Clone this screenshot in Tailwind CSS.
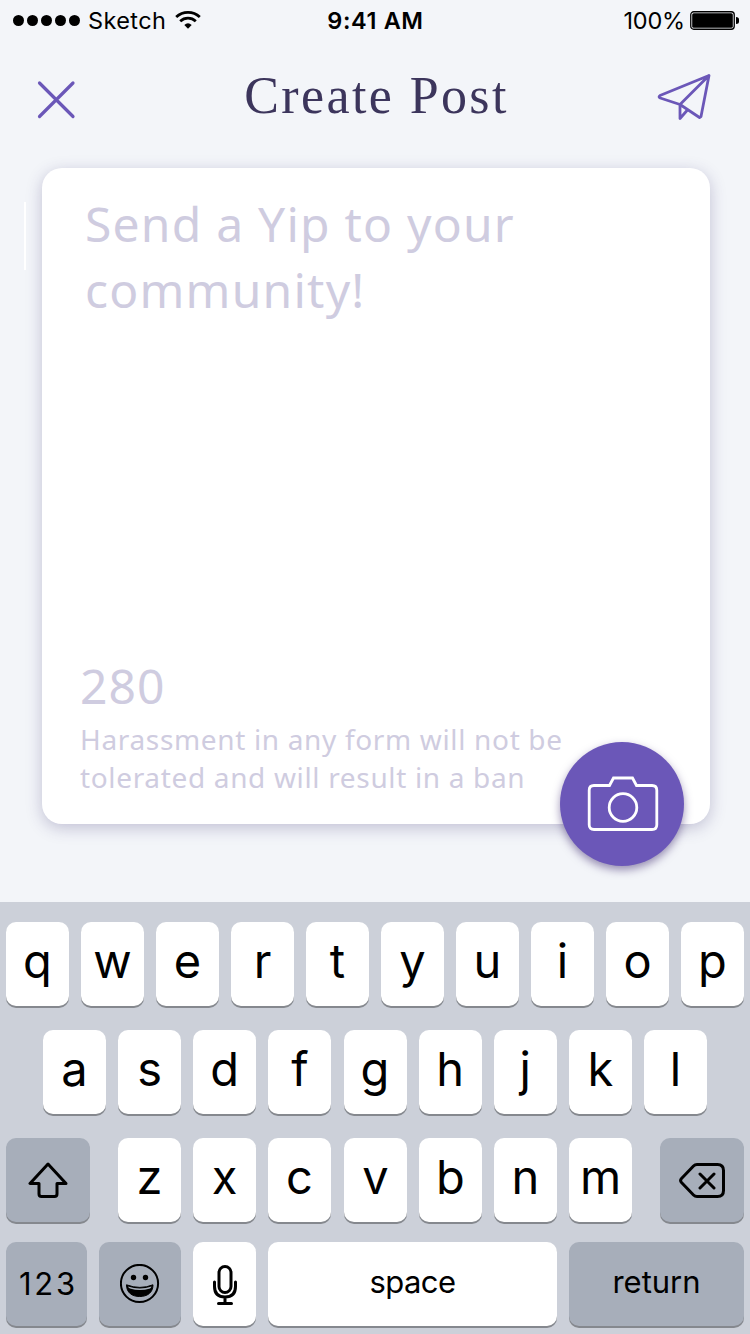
<!DOCTYPE html>
<html lang="en">
<head>
<meta charset="utf-8">
<title>Create Post</title>
<script src="https://cdn.jsdelivr.net/npm/@tailwindcss/browser@4"></script>
</head>
<body class="bg-[#f3f5f9]">
<main class="w-[750px] h-[1334px] overflow-hidden flex flex-col bg-[#f3f5f9] font-['Inter',sans-serif] text-black">
  <div class="h-10 shrink-0 grid grid-cols-3 items-center pl-3 pr-[11px] text-[23.5px] leading-[38px]">
    <div class="flex items-center">
      <svg class="w-[69px] h-3 shrink-0" viewBox="0 0 69 12"><circle cx="6.5" cy="6.500" r="5.5"/><circle cx="20.5" cy="6.500" r="5.5"/><circle cx="34.5" cy="6.500" r="5.5"/><circle cx="48.5" cy="6.500" r="5.5"/><circle cx="62.5" cy="6.500" r="5.5"/></svg>
      <span class="ml-[7px] w-[87px] pt-0.5 tracking-[0.4px]">Sketch</span>
      <svg class="w-[26px] h-[18px] shrink-0" viewBox="0 0 26 18" fill="none" stroke="#000" stroke-width="2.8"><path d="M1.2 6.1Q6.200 1.400 13 1.400T24.800 6.100M5.200 10.200Q8.600 7.100 13 7.100T20.800 10.200"/><path d="M9.300 14Q13 10.600 16.700 14L13 17.700Z" fill="#000" stroke="none"/></svg>
    </div>
    <div class="text-center pt-0.5 font-semibold tracking-[0.600px]">9:41 AM</div>
    <div class="flex items-center justify-end">
      <span class="mr-[5px] pt-0.5 tracking-[-0.200px]">100%</span>
      <svg class="w-[49px] h-[19px]" viewBox="0 0 49 19"><rect x=".75" y=".75" width="43.500" height="17.500" rx="3" fill="none" stroke="#000" stroke-width="1.300"/><rect x="2.200" y="2.200" width="40.600" height="14.600" rx="1.500"/><path d="M46 6q3 0 3 2.500v2q0 2.500-3 2.500z"/></svg>
    </div>
  </div>

  <header class="h-32 shrink-0 flex items-start justify-between pl-[37px] pr-[39px]">
    <svg class="mt-10 w-[39px] h-[39px]" viewBox="0 0 39 39" fill="none" stroke="#6b57b8" stroke-width="3.200" stroke-linecap="round"><path d="M2.500 3 36 36.500M36 3 2.500 36.500"/></svg>
    <h1 class="mt-[28px] ml-[20px] h-14 leading-[56px] whitespace-nowrap font-['Liberation_Serif',serif] text-[52px] tracking-[2.400px] text-[#3c355c]">Create Post</h1>
    <svg class="mt-[32px] w-[54px] h-[50px]" viewBox="0 0 54 50" fill="none" stroke="#6b57b8" stroke-width="2.800" stroke-linejoin="round" stroke-linecap="round"><path d="M52 3.500 3 23.500Q1 25 3.200 26L23 32.500 42.500 45.500 44 44.500ZM52 3.500 23 32.500V46.500L30 38.500"/></svg>
  </header>

  <section class="relative ml-[42px] w-[668px] h-[656px] shrink-0 rounded-[20px] bg-white shadow-[0_4px_16px_rgba(60,50,115,0.27)] flex flex-col justify-between font-['Noto_Sans',sans-serif] text-[#cfcce0]">
    <i class="absolute -left-[18px] top-[34px] w-[2px] h-[68px] bg-white"></i>
    <p class="pl-[43px] pt-[23px] text-[48px] leading-[66px] tracking-[1.220px]">Send a Yip to your<br>community!</p>
    <div class="pl-[38px] pb-[28px]">
      <p class="text-[48px] leading-[66px] tracking-[1.100px]">280</p>
      <p class="mt-px text-[28px] leading-[38px] tracking-[0.660px] whitespace-nowrap">Harassment in any form will not be<br>tolerated and will result in a ban</p>
    </div>
    <button class="absolute left-[518px] top-[574px] size-[124px] rounded-full bg-[#6b57b8] shadow-[0_4px_8px_rgba(60,40,110,0.5)] grid place-items-center" aria-label="Add photo">
      <svg class="w-[72px] h-[56px] ml-[2px]" viewBox="0 0 72 56" fill="none" stroke="#fff" stroke-width="2.800"><path d="M7 9.500H22.500L26.500 2H45.500L49.500 9.500H65Q69.800 9.500 69.800 14.300V48.700Q69.800 53.500 65 53.500H7Q2.200 53.500 2.200 48.700V14.300Q2.200 9.500 7 9.500Z"/><circle cx="36" cy="31.500" r="13.800"/></svg>
    </button>
  </section>

  <section class="mt-[78px] h-[432px] shrink-0 bg-[#ccd0d9] px-1.5 pt-5 flex flex-col text-[47px] leading-[78px] text-center [&_.key]:h-[84px] [&_.key]:w-[63px] [&_.key]:shrink-0 [&_.key]:rounded-[10px] [&_.key]:bg-white [&_.key]:shadow-[0_2px_0_#85888e] [&_.fn]:h-[84px] [&_.fn]:shrink-0 [&_.fn]:rounded-[10px] [&_.fn]:bg-[#a7aeba] [&_.fn]:shadow-[0_2px_0_#85888e]">
    <div class="flex justify-between">
      <div class="key">q</div><div class="key">w</div><div class="key">e</div><div class="key">r</div><div class="key">t</div><div class="key">y</div><div class="key">u</div><div class="key">i</div><div class="key">o</div><div class="key">p</div>
    </div>
    <div class="mt-6 flex justify-between px-[37px]">
      <div class="key">a</div><div class="key">s</div><div class="key">d</div><div class="key">f</div><div class="key">g</div><div class="key">h</div><div class="key">j</div><div class="key">k</div><div class="key">l</div>
    </div>
    <div class="mt-6 flex justify-between">
      <div class="fn w-[84px] grid place-items-center"><svg class="w-10 h-9" viewBox="0 0 40 36" fill="none" stroke="#000" stroke-width="3" stroke-linejoin="round"><path d="M20 2 2 21.500H11V32Q11 34.500 13.500 34.500H26.500Q29 34.500 29 32V21.500H38Z"/></svg></div>
      <div class="w-[514px] flex justify-between"><div class="key">z</div><div class="key">x</div><div class="key">c</div><div class="key ml-px">v</div><div class="key">b</div><div class="key">n</div><div class="key">m</div></div>
      <div class="fn w-[84px] grid place-items-center"><svg class="w-[46px] h-[35px]" viewBox="0 0 46 35" fill="none" stroke="#000" stroke-width="3" stroke-linecap="round" stroke-linejoin="round"><path d="M18 1.500H38.500Q44.500 1.500 44.500 7.500V27.500Q44.500 33.500 38.500 33.500H18Q16 33.500 14.500 32L2.500 19.500Q.7 17.500 2.500 15.500L14.500 3Q16 1.500 18 1.500ZM21 11 35 25M35 11 21 25"/></svg></div>
    </div>
    <div class="mt-5 flex gap-3 text-[31px] leading-[80px]">
      <div class="fn w-[81px] tracking-[2.800px] leading-[84px] pl-[4px]">123</div>
      <div class="fn w-[82px] grid place-items-center"><svg class="size-10" viewBox="0 0 40 40" fill="none" stroke="#000" stroke-width="2"><circle cx="19.500" cy="19.500" r="18.600"/><circle cx="13.500" cy="13.500" r="2.700" fill="#000" stroke="none"/><circle cx="25.500" cy="13.500" r="2.700" fill="#000" stroke="none"/><path d="M6.500 20.800Q20 26 33 20.800C33 29 27 32.500 19.700 32.500S6.500 29 6.500 20.800Z" fill="#000" stroke-width="1" stroke-linejoin="round"/><path d="M8 22.500Q20 26.300 31.500 22.500Q31 23.800 30 24.500Q20 27.500 10 24.500Q8.500 23.800 8 22.500Z" fill="#a7aeba" stroke="none"/></svg></div>
      <div class="key grid place-items-center"><svg class="w-6 h-10 mt-[2px]" viewBox="0 0 24 40" fill="none" stroke="#000" stroke-width="3" stroke-linecap="round"><rect x="6" y="1.500" width="12" height="26" rx="6"/><path d="M1.500 17V21.500C1.500 28 5 32 12 32S22.500 28 22.500 21.500V17M12 32V38.500M5.500 38.500H18.500"/></svg></div>
      <div class="fn w-[289px] !bg-white tracking-[-0.600px]">space</div>
      <div class="fn w-[175px]">return</div>
    </div>
  </section>
</main>
</body>
</html>
